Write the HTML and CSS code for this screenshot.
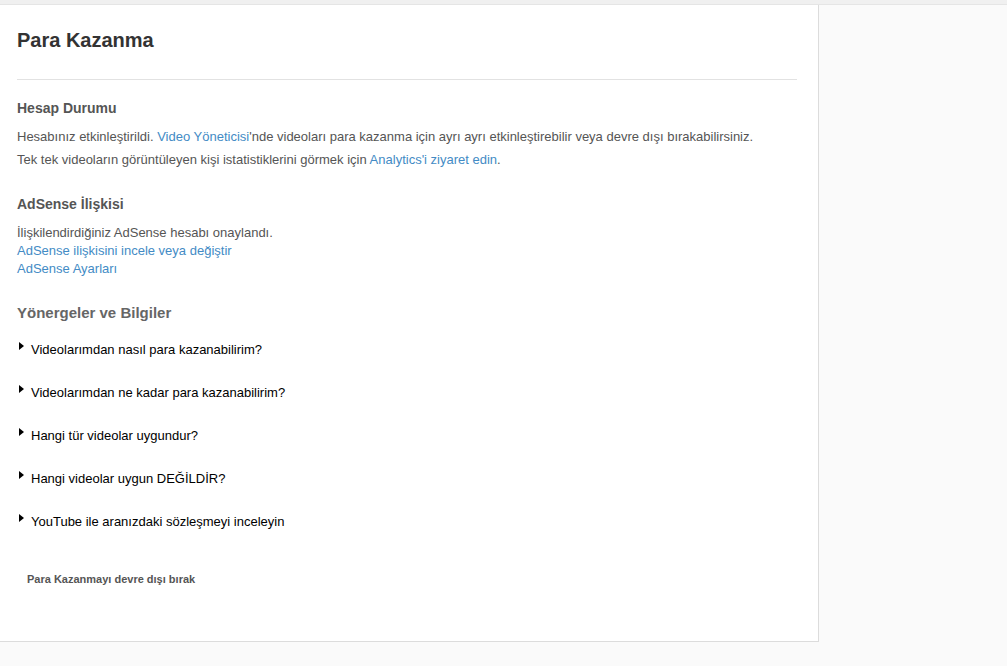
FILE: index.html
```html
<!DOCTYPE html>
<html lang="tr">
<head>
    <meta charset="UTF-8">
    <title>Para Kazanma</title>
    <link rel="stylesheet" href="styles.css">
</head>
<body>
    <div class="top-strip"></div>

    <div class="panel">
        <h1 class="page-title">Para Kazanma</h1>

        <!-- Hesap durumu -->
        <div class="section">
            <h2>Hesap Durumu</h2>
            <p class="status">Hesabınız etkinleştirildi. <a href="#">Video Yöneticisi</a>'nde videoları para kazanma için ayrı ayrı etkinleştirebilir veya devre dışı bırakabilirsiniz.</p>
            <p class="status">Tek tek videoların görüntüleyen kişi istatistiklerini görmek için <a href="#">Analytics'i ziyaret edin</a>.</p>
        </div>

        <!-- AdSense -->
        <div class="section">
            <h2>AdSense İlişkisi</h2>
            <div class="adsense">
                <div>İlişkilendirdiğiniz AdSense hesabı onaylandı.</div>
                <a href="#">AdSense ilişkisini incele veya değiştir</a>
                <a href="#">AdSense Ayarları</a>
            </div>
        </div>

        <!-- Yönergeler -->
        <div class="section">
            <h2 class="big">Yönergeler ve Bilgiler</h2>
            <ul class="faq">
                <li><span class="arrow"></span>Videolarımdan nasıl para kazanabilirim?</li>
                <li><span class="arrow"></span>Videolarımdan ne kadar para kazanabilirim?</li>
                <li><span class="arrow"></span>Hangi tür videolar uygundur?</li>
                <li><span class="arrow"></span>Hangi videolar uygun DEĞİLDİR?</li>
                <li><span class="arrow"></span>YouTube ile aranızdaki sözleşmeyi inceleyin</li>
            </ul>
        </div>

        <button class="disable-button">Para Kazanmayı devre dışı bırak</button>
    </div>
</body>
</html>
```

FILE: styles.css
```css
body {
    margin: 0;
    background: #fafafa;
    font-family: "Liberation Sans", Arial, sans-serif;
    color: #555;
}

.top-strip {
    height: 4px;
    background: #f0f0f0;
    border-bottom: 1px solid #e5e5e5;
}

/* main white panel */
.panel {
    box-sizing: border-box;
    width: 819px;
    height: 637px;
    padding: 23px 21px 0 17px;
    background: #fff;
    border-right: 1px solid #dcdcdc;
    border-bottom: 1px solid #dcdcdc;
}

.page-title {
    margin: 0;
    font-size: 20px;
    line-height: 24px;
    color: #333;
    padding-bottom: 27px;
    border-bottom: 1px solid #e2e2e2;
}

.section h2 {
    margin: 0;
    font-size: 14px;
    line-height: 18px;
    color: #555;
}

.section h2.big {
    font-size: 15px;
    color: #666;
}

.section:first-of-type h2 {
    margin-top: 19px;
}

.status {
    margin: 0;
    font-size: 13px;
    line-height: 23px;
}

.section h2 + .status {
    margin-top: 8px;
}

a {
    color: #438bc5;
    text-decoration: none;
}

.section + .section {
    margin-top: 24px;
}

.section + .section:last-of-type {
    margin-top: 26px;
}

.adsense {
    margin-top: 11px;
    font-size: 13px;
    line-height: 18px;
}

.adsense a {
    display: block;
}

.faq {
    list-style: none;
    margin: 19px 0 0;
    padding: 0;
}

.faq li {
    display: flex;
    align-items: flex-start;
    font-size: 13px;
    line-height: 18px;
    color: #000;
    height: 43px;
}

.arrow {
    width: 0;
    height: 0;
    margin: 1px 7px 0 2px;
    border-top: 4.5px solid transparent;
    border-bottom: 4.5px solid transparent;
    border-left: 5px solid #000;
}

.disable-button {
    margin: 17px 0 0 10px;
    padding: 0;
    border: none;
    background: none;
    font-family: "Liberation Sans", Arial, sans-serif;
    font-size: 11px;
    font-weight: bold;
    color: #555;
}
```
